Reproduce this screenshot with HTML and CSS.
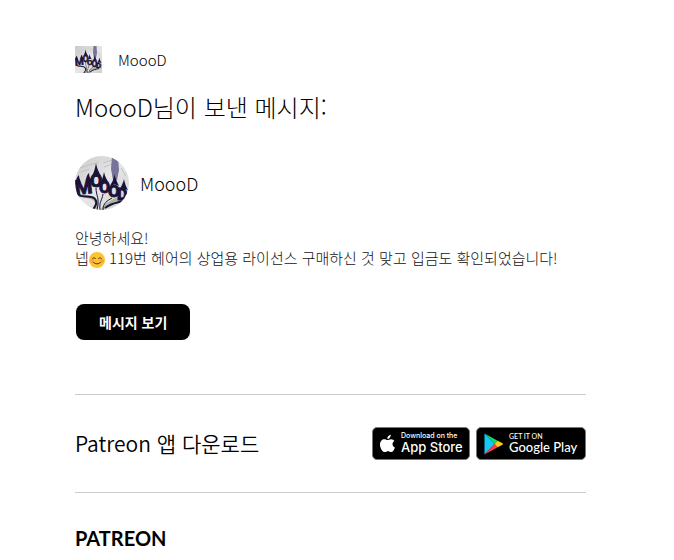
FILE: index.html
```html
<!DOCTYPE html>
<html lang="ko">
<head>
<meta charset="utf-8">
<title>MoooD님이 보낸 메시지</title>
<meta name="viewport" content="width=device-width, initial-scale=1">
<link rel="stylesheet" href="styles.css">
</head>
<body>
<svg class="defs" aria-hidden="true">
  <defs>
    <linearGradient id="paper" x1="0" y1="0" x2="1" y2="1">
      <stop offset="0" stop-color="#c9c9c9"/>
      <stop offset="0.5" stop-color="#e6e6e8"/>
      <stop offset="1" stop-color="#cfd0cf"/>
    </linearGradient>
    <symbol id="avatar" viewBox="0 0 54 54">
      <rect width="54" height="54" fill="url(#paper)"/>
      <path d="M5 12 24 6M6 16 15 13M28 7l9-3M29 11l8-3M46 12l5 8" stroke="#c2c2c2" fill="none"/>
      <path d="M37 0h6l1 14-2 10h-4l-2-11z" fill="#77739a"/>
      <path d="M0 37c8 5 16 2 20 7s1 8-3 10M54 44c-12-4-17 2-22 5-4 3-4 4-5 5" fill="none" stroke="#a9b59a" stroke-width="3"/>
      <g class="lettering" fill="#1b1238" stroke="#1b1238">
        <text x="0" y="38" font-size="20" transform="rotate(-6 8 34)">M</text>
        <text x="15" y="31" font-size="18">O</text>
        <text x="24" y="37" font-size="16">O</text>
        <text x="33" y="41" font-size="17">O</text>
        <text x="42" y="44" font-size="16">D</text>
      </g>
      <g fill="#1b1238">
        <path d="M1 26c0-3 1-5 3-7 0 3 1 4 2 8zM11 25c0-4 1-6 3-8 0 4 2 6 2 9z"/>
        <path d="M17 20c2-4 3-7 4-13 1 6 3 9 5 13q-4-3-9 0zM26 27c1-4 2-6 3-11 1 5 3 8 5 11q-4-3-8 0zM35 30c2-4 4-6 4-12 2 5 3 8 5 12q-4-3-9 0zM45 34c1-4 3-6 4-11 1 5 2 8 4 11q-4-2-8 0z"/>
      </g>
      <g fill="none" stroke="#1b1238" stroke-width="2">
        <path d="M2 38c6 5 14 0 18 5 3 4 0 7-2 11"/>
        <path d="M21 32c0 8 4 10 1 22" stroke-width="1"/>
        <path d="M28 38c-1 7-4 7-3 16" stroke-width="1"/>
        <path d="M37 42c-5 3-9 5-9 12" stroke-width="1"/>
        <path d="M48 45c-7 2-12 2-18 7"/>
      </g>
    </symbol>
  </defs>
</svg>
<main class="mail">
  <header class="brand">
    <svg class="brand-thumb" role="img" aria-label="MoooD"><use href="#avatar"/></svg>
    <span class="brand-name">MoooD</span>
  </header>
  <h1 class="title">MoooD님이 보낸 메시지:</h1>
  <section class="sender">
    <svg class="sender-avatar" role="img" aria-label="MoooD"><use href="#avatar"/></svg>
    <span class="sender-name">MoooD</span>
  </section>
  <p class="message">안녕하세요!<br>넵<svg class="emoji" viewBox="0 0 16 16" role="img" aria-label="☺️"><circle cx="8" cy="8" r="8" fill="#fcc433"/><circle cx="3" cy="9" r="2" fill="#f9a53c"/><circle cx="13" cy="9" r="2" fill="#f9a53c"/><path d="M3.500 6.500q1.500-2 3 0M9.500 6.500q1.500-2 3 0M4.500 10.500q3.500 3 7 0" fill="none" stroke="#5f3b16" stroke-linecap="round"/></svg> 119번 헤어의 상업용 라이선스 구매하신 것 맞고 입금도 확인되었습니다!</p>
  <a class="button" href="#message">메시지 보기</a>
  <section class="apps">
    <h2 class="apps-title">Patreon 앱 다운로드</h2>
    <div class="badges">
      <a class="badge badge-apple" href="#app-store">
        <svg class="apple-icon" viewBox="0 0 16 20" aria-hidden="true"><path fill="#fff" d="M11.500 0c.2 2.400-1.700 4.500-3.800 4.500C7.400 2.300 9.400.2 11.500 0zM8.200 5.800c.8 0 2-1 3.800-.9 1.400.1 2.600.7 3.300 1.800-2.900 1.800-2.400 5.700.6 6.900-.6 1.800-2.100 4.900-3.900 5-1.300 0-1.800-.8-3.400-.8s-2.100.8-3.400.8C2.600 18.700 0 14.300 0 10.700c0-3.600 2.200-5.700 4.600-5.700 1.500 0 2.700.8 3.600.8z"/></svg>
        <span class="badge-text"><small>Download on the</small><strong>App Store</strong></span>
      </a>
      <a class="badge badge-google" href="#google-play">
        <svg class="play-icon" viewBox="0 0 19 22" aria-hidden="true"><path fill="#13c8f4" d="M.5.5v21L10.500 11z"/><path fill="#16d66e" d="M.5.500 13.700 7.700 10.500 11z"/><path fill="#fc3b4b" d="M.5 21.500 13.700 14.300 10.500 11z"/><path fill="#ffc90f" d="m13.700 7.700 4.800 2.600q.8.700 0 1.400l-4.800 2.600L10.500 11z"/></svg>
        <span class="badge-text"><small>GET IT ON</small><strong>Google Play</strong></span>
      </a>
    </div>
  </section>
  <footer class="footer">PATREON</footer>
</main>
</body>
</html>
```
FILE: styles.css
```css
* {
  box-sizing: border-box;
}

body {
  margin: 0;
  background: #fff;
  color: #000;
  font-family: "Noto Sans CJK KR", "Noto Sans", sans-serif;
  font-weight: 300;
}

.defs {
  position: absolute;
  width: 0;
  height: 0;
}

.lettering {
  font-family: Roboto, sans-serif;
  font-weight: 700;
}

.mail {
  padding: 46px 88px 8px 75px;
}

.brand {
  display: flex;
  align-items: center;
  gap: 16px;
  font-size: 15px;
  line-height: 27px;
}

.brand-thumb {
  width: 27px;
  height: 27px;
}

.title {
  margin: 16px 0 32px;
  font-size: 24px;
  font-weight: 300;
  line-height: 35px;
}

.sender {
  display: flex;
  align-items: center;
  gap: 11px;
  font-size: 18px;
}

.sender-avatar {
  width: 54px;
  height: 54px;
  border-radius: 50%;
}

.message {
  margin: 18px 0 36px;
  color: #111;
  font-size: 15px;
  line-height: 20px;
}

.emoji {
  width: 16px;
  height: 16px;
  vertical-align: -4px;
}

.button {
  display: inline-block;
  margin-left: 1px;
  padding: 0 23px;
  border-radius: 8px;
  background: #000;
  color: #fff;
  font-size: 14px;
  font-weight: 700;
  line-height: 36px;
  text-decoration: none;
  vertical-align: top;
}

.apps {
  display: flex;
  align-items: center;
  justify-content: space-between;
  margin-top: 54px;
  padding: 32px 0;
  border-top: 1px solid #ccc;
  border-bottom: 1px solid #ccc;
}

.apps-title {
  margin: 0;
  font-size: 21px;
  font-weight: 350;
  line-height: 33px;
}

.badges {
  display: flex;
  gap: 6px;
}

.badge {
  display: flex;
  align-items: center;
  height: 33px;
  border: 1px solid #777;
  border-radius: 5px;
  background: #000;
  color: #fff;
  text-decoration: none;
}

.badge-apple {
  gap: 6px;
  width: 98px;
  padding-left: 7px;
  font-family: Inter, sans-serif;
}

.badge-google {
  gap: 6px;
  width: 110px;
  padding-left: 7px;
  font-family: Lato, sans-serif;
}

.apple-icon {
  width: 15px;
  height: 20px;
}

.play-icon {
  width: 19px;
  height: 22px;
}

.badge-text {
  display: flex;
  flex-direction: column;
  white-space: nowrap;
}

.badge small {
  font-size: 7px;
  font-weight: 500;
  line-height: 8px;
}

.badge strong {
  font-size: 13px;
  font-weight: 500;
  line-height: 15px;
}

.footer {
  margin-top: 31px;
  font-family: Lato, sans-serif;
  font-size: 20px;
  font-weight: 700;
  line-height: 28px;
}
```
